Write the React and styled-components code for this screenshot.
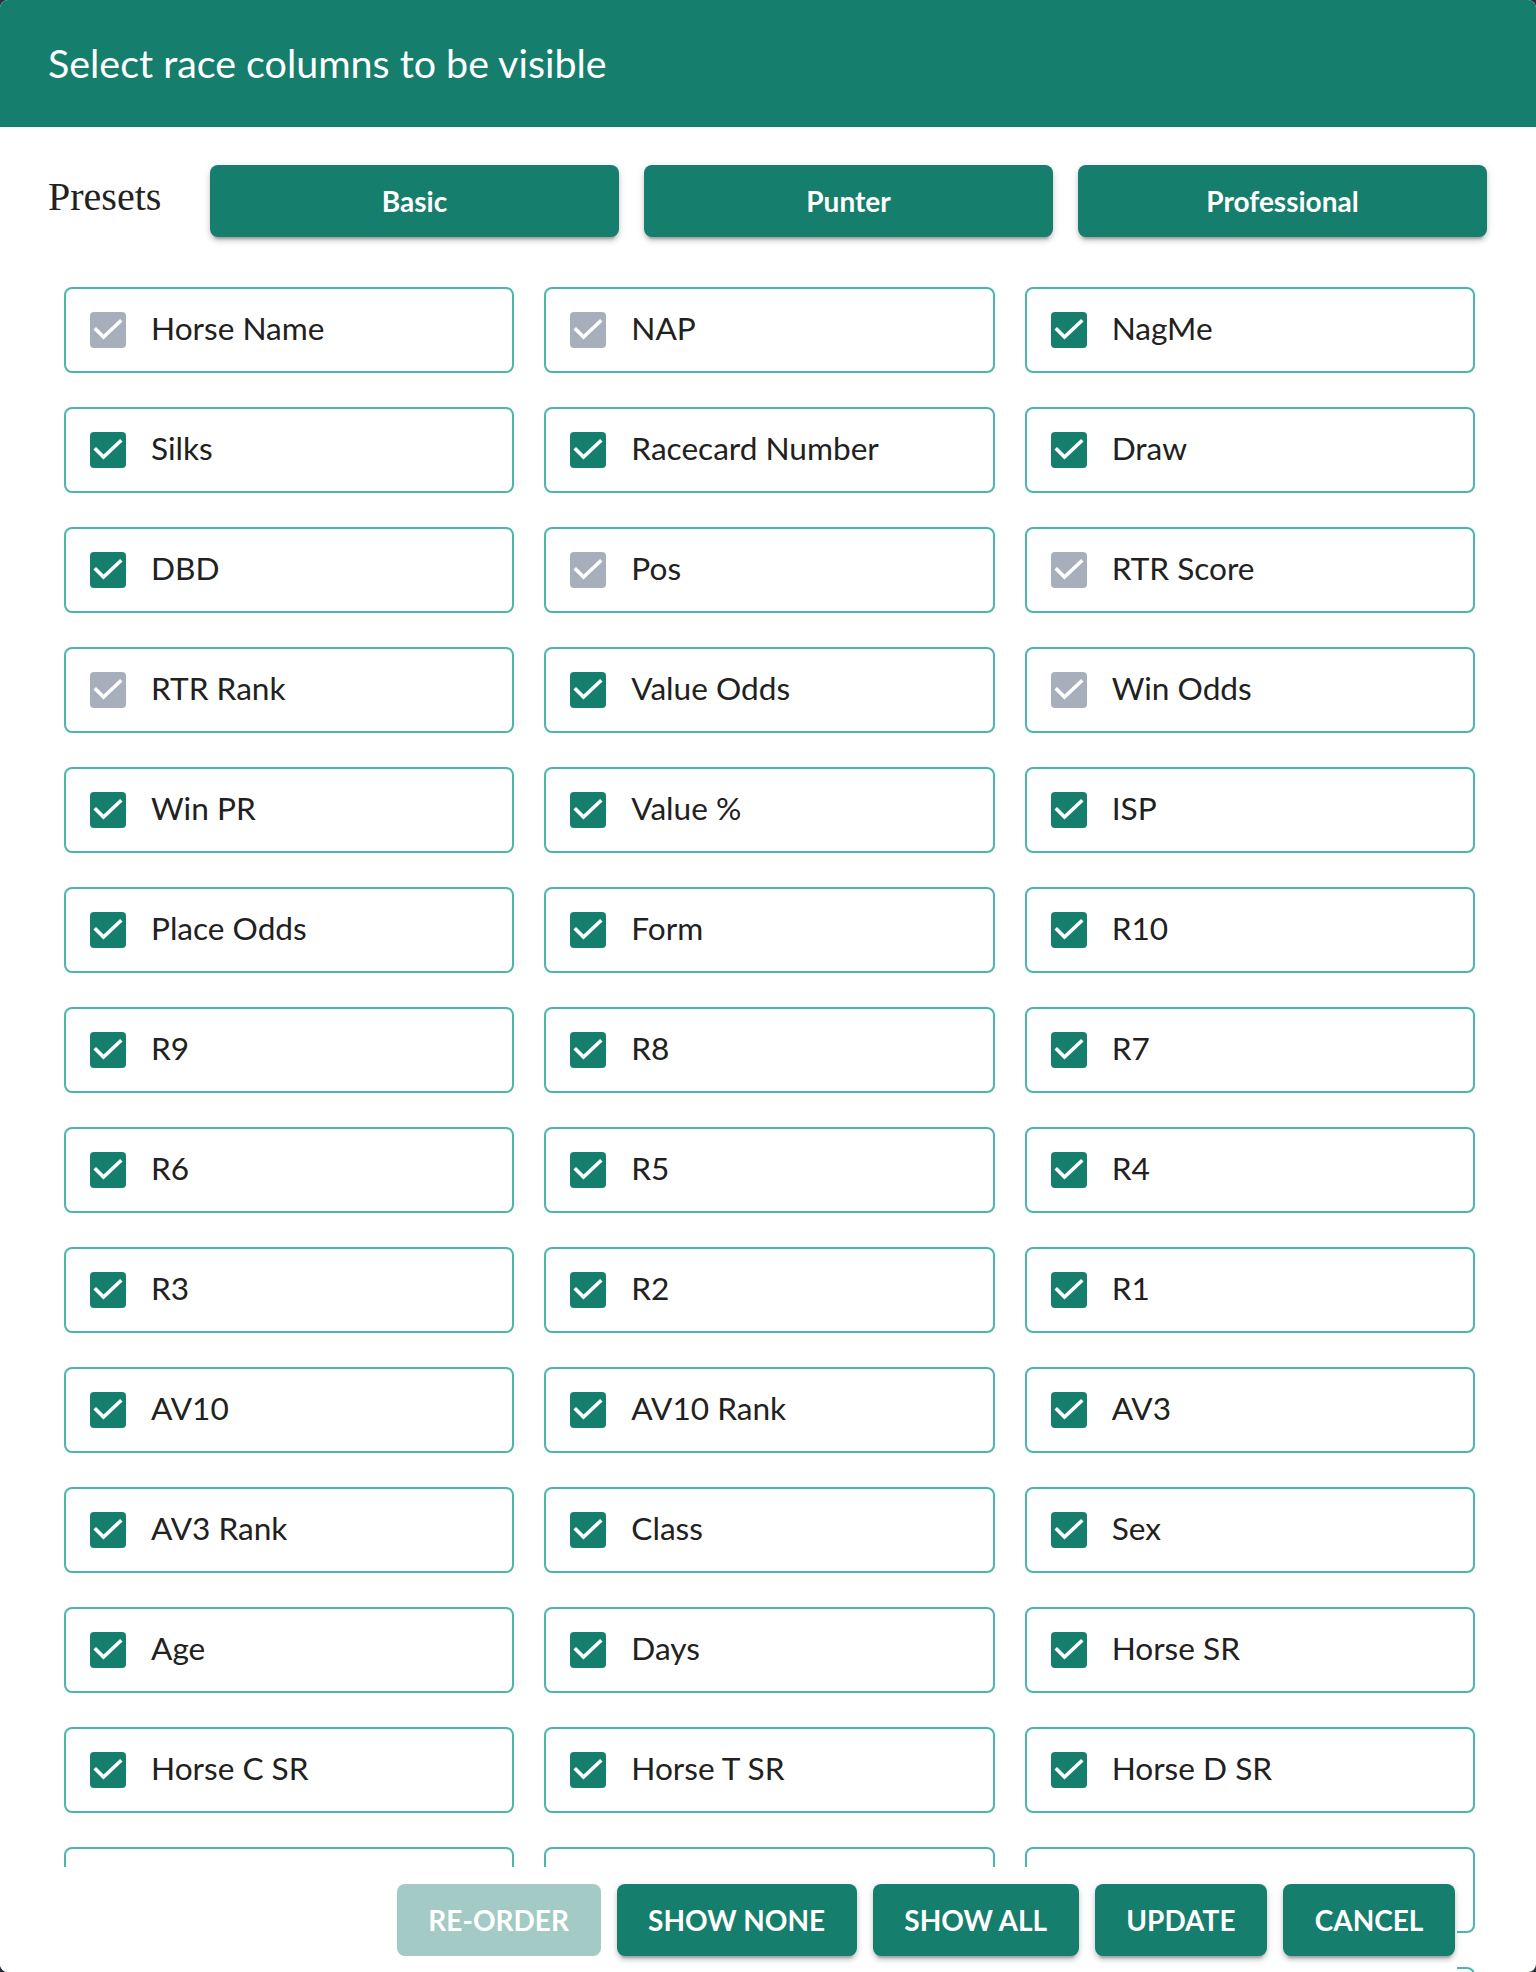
import React from "react";
import styled, { createGlobalStyle } from "styled-components";

const GlobalStyle = createGlobalStyle`
  html, body {
    margin: 0;
    padding: 0;
    background: #2d2f36;
  }
  * {
    box-sizing: border-box;
  }
`;

const rows = [
  [["Horse Name", "off"], ["NAP", "off"], ["NagMe", "on"]],
  [["Silks", "on"], ["Racecard Number", "on"], ["Draw", "on"]],
  [["DBD", "on"], ["Pos", "off"], ["RTR Score", "off"]],
  [["RTR Rank", "off"], ["Value Odds", "on"], ["Win Odds", "off"]],
  [["Win PR", "on"], ["Value %", "on"], ["ISP", "on"]],
  [["Place Odds", "on"], ["Form", "on"], ["R10", "on"]],
  [["R9", "on"], ["R8", "on"], ["R7", "on"]],
  [["R6", "on"], ["R5", "on"], ["R4", "on"]],
  [["R3", "on"], ["R2", "on"], ["R1", "on"]],
  [["AV10", "on"], ["AV10 Rank", "on"], ["AV3", "on"]],
  [["AV3 Rank", "on"], ["Class", "on"], ["Sex", "on"]],
  [["Age", "on"], ["Days", "on"], ["Horse SR", "on"]],
  [["Horse C SR", "on"], ["Horse T SR", "on"], ["Horse D SR", "on"]],
  [["Jockey SR", "on"], ["Trainer SR", "on"], ["Jockey C SR", "on"]],
  [["Trainer C SR", "on"], ["Jockey T SR", "on"], ["Trainer T SR", "on"]],
];

const CheckIcon = ({ locked }) => (
  <svg width="36" height="36" viewBox="0 0 36 36">
    <rect width="36" height="36" rx="4" fill={locked ? "#a7afbc" : "#167e6d"} />
    <path d="M6 17.5 L13.5 25 L30 9.5" fill="none" stroke="#fff" strokeWidth="3.6" strokeLinecap="square" />
  </svg>
);

const App = () => {
  return (
    <>
      <GlobalStyle />
      <Dialog>
        <Header>
          <Title>Select race columns to be visible</Title>
        </Header>
        <PresetRow>
          <PresetLabel>Presets</PresetLabel>
          <PresetBtn>Basic</PresetBtn>
          <PresetBtn>Punter</PresetBtn>
          <PresetBtn>Professional</PresetBtn>
        </PresetRow>
        <Grid>
          {rows.flat().map(([name, state], i) => (
            <Card key={i}>
              <CheckIcon locked={state === "off"} />
              <Label>{name}</Label>
            </Card>
          ))}
        </Grid>
        <Footer>
          <ActionBtn disabled>RE-ORDER</ActionBtn>
          <ActionBtn>SHOW NONE</ActionBtn>
          <ActionBtn>SHOW ALL</ActionBtn>
          <ActionBtn>UPDATE</ActionBtn>
          <ActionBtn>CANCEL</ActionBtn>
        </Footer>
      </Dialog>
    </>
  );
};

const Dialog = styled.div`
position: relative;
width: 1536px;
height: 1972px;
overflow: hidden;
background: #fff;
border-radius: 8px;
font-family: Lato, "Open Sans", sans-serif;
`;

const Header = styled.div`
display: flex;
align-items: center;
height: 127px;
padding-left: 48px;
background: #167e6d;
`;

const Title = styled.h2`
margin: 0 0 2px;
font-size: 39.4px;
font-weight: 400;
color: #fff;
`;

const PresetRow = styled.div`
display: flex;
align-items: center;
gap: 25px;
padding: 38px 49px 0 48px;
`;

const PresetLabel = styled.div`
width: 137px;
padding-bottom: 9px;
font-family: "Liberation Serif", serif;
font-size: 40px;
color: #222;
`;

const PresetBtn = styled.button`
flex: 1;
height: 72px;
padding-bottom: 2px;
border: none;
border-radius: 8px;
background: #167e6d;
color: #fff;
font-family: Lato, sans-serif;
font-weight: 700;
font-size: 28px;
box-shadow: 0 6px 2px -4px rgba(0,0,0,.2), 0 4px 4px 0 rgba(0,0,0,.14), 0 2px 10px 0 rgba(0,0,0,.12);
`;

const Grid = styled.div`
display: grid;
grid-template-columns: repeat(3, 1fr);
column-gap: 30px;
row-gap: 34px;
padding: 50px 61px 0 64px;
`;

const Card = styled.label`
display: flex;
align-items: center;
gap: 25px;
height: 86px;
padding-left: 24px;
border: 2px solid #4db6ac;
border-radius: 8px;
`;

const Label = styled.span`
padding-bottom: 4px;
font-size: 31.6px;
color: #212121;
`;

const Footer = styled.div`
position: absolute;
left: 0;
top: 1867px;
bottom: 0;
width: 1457px;
display: flex;
justify-content: flex-end;
align-items: flex-start;
gap: 16px;
padding: 17px 2px 0 0;
background: #fff;
`;

const ActionBtn = styled.button`
height: 72px;
padding: 0 31.6px;
border: none;
border-radius: 8px;
background: ${(p) => (p.disabled ? "#a3cac4" : "#167e6d")};
color: #fff;
font-family: Lato, sans-serif;
font-weight: 700;
font-size: 28px;
box-shadow: ${(p) =>
  p.disabled
    ? "none"
    : "0 6px 2px -4px rgba(0,0,0,.2), 0 4px 4px 0 rgba(0,0,0,.14), 0 2px 10px 0 rgba(0,0,0,.12)"};
`;

export default App;
